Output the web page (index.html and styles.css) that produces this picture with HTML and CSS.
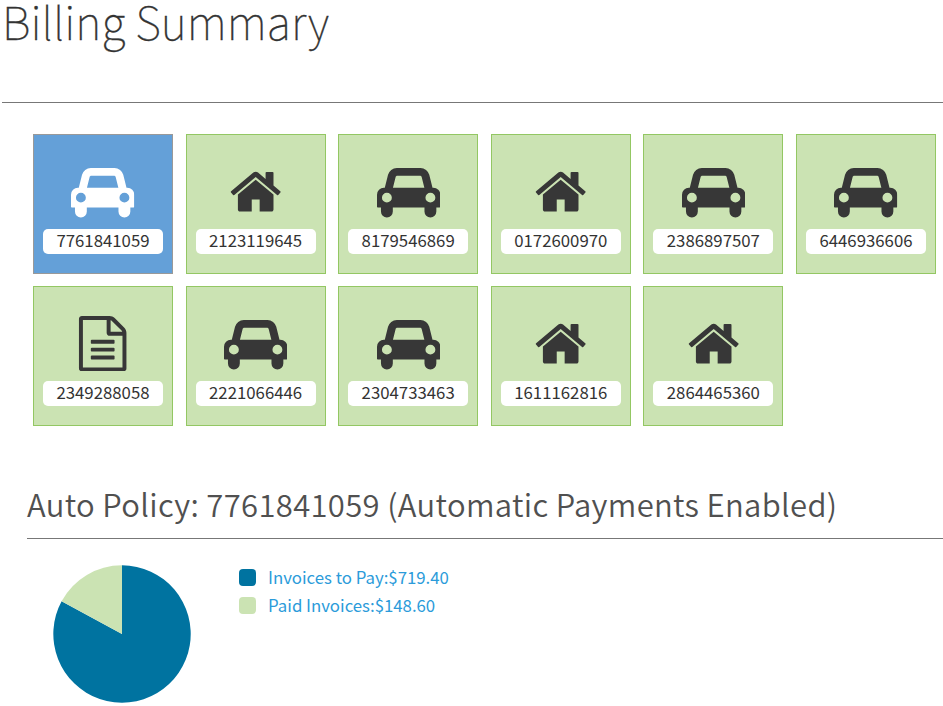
FILE: index.html
```html
<!DOCTYPE html>
<html lang="en">
<head>
<meta charset="utf-8">
<title>Billing Summary</title>
<link rel="stylesheet" href="styles.css">
</head>
<body>
<svg class="defs" width="0" height="0" aria-hidden="true">
  <symbol id="car" viewBox="0 0 2048 1792"><path d="M480 1088q0-66-47-113t-113-47-113 47-47 113 47 113 113 47 113-47 47-113zm36-320h1016l-89-357q-2-8-14-17.500t-21-9.500h-768q-9 0-21 9.500t-14 17.500zm1372 320q0-66-47-113t-113-47-113 47-47 113 47 113 113 47 113-47 47-113zm160-96v384q0 14-9 23t-23 9h-96v128q0 80-56 136t-136 56-136-56-56-136v-128h-1024v128q0 80-56 136t-136 56-136-56-56-136v-128h-96q-14 0-23-9t-9-23v-384q0-93 65.500-158.500t158.500-65.500h28l105-419q23-94 104-157.500t179-63.500h768q98 0 179 63.500t104 157.500l105 419h28q93 0 158.500 65.500t65.500 158.500z"/></symbol>
  <symbol id="home" viewBox="0 0 1792 1792"><path d="M1472 992v480q0 26-19 45t-45 19h-384v-384h-256v384h-384q-26 0-45-19t-19-45v-480q0-1 .5-3t.5-3l575-474 575 474q1 2 1 6zm223-69l-62 74q-8 9-21 11h-3q-13 0-21-7l-692-577-692 577q-12 8-24 7-13-2-21-11l-62-74q-8-10-7-23.500t11-21.500l719-599q32-26 76-26t76 26l244 204v-195q0-14 9-23t23-9h192q14 0 23 9t9 23v408l219 182q10 8 11 21.500t-7 23.500z"/></symbol>
  <symbol id="file" viewBox="0 0 1792 1792"><path d="M1596 380q28 28 48 76t20 88v1152q0 40-28 68t-68 28h-1344q-40 0-68-28t-28-68v-1600q0-40 28-68t68-28h896q40 0 88 20t76 48zm-444-244v376h376q-10-29-22-41l-313-313q-12-12-41-22zm384 1528v-1024h-416q-40 0-68-28t-28-68v-416h-768v1536h1280zM512 800q0-14 9-23t23-9h704q14 0 23 9t9 23v64q0 14-9 23t-23 9h-704q-14 0-23-9t-9-23zM1248 1024q14 0 23 9t9 23v64q0 14-9 23t-23 9h-704q-14 0-23-9t-9-23v-64q0-14 9-23t23-9zM1248 1280q14 0 23 9t9 23v64q0 14-9 23t-23 9h-704q-14 0-23-9t-9-23v-64q0-14 9-23t23-9z"/></symbol>
</svg>
<header class="page-header"><h1>Billing Summary</h1></header>
<main>
  <div class="tiles">
    <div class="tile active"><svg class="icon car"><use href="#car"/></svg><span class="number">7761841059</span></div>
    <div class="tile"><svg class="icon"><use href="#home"/></svg><span class="number">2123119645</span></div>
    <div class="tile"><svg class="icon car"><use href="#car"/></svg><span class="number">8179546869</span></div>
    <div class="tile"><svg class="icon"><use href="#home"/></svg><span class="number">0172600970</span></div>
    <div class="tile"><svg class="icon car"><use href="#car"/></svg><span class="number">2386897507</span></div>
    <div class="tile"><svg class="icon car"><use href="#car"/></svg><span class="number">6446936606</span></div>
    <div class="tile"><svg class="icon"><use href="#file"/></svg><span class="number">2349288058</span></div>
    <div class="tile"><svg class="icon car"><use href="#car"/></svg><span class="number">2221066446</span></div>
    <div class="tile"><svg class="icon car"><use href="#car"/></svg><span class="number">2304733463</span></div>
    <div class="tile"><svg class="icon"><use href="#home"/></svg><span class="number">1611162816</span></div>
    <div class="tile"><svg class="icon"><use href="#home"/></svg><span class="number">2864465360</span></div>
  </div>
  <section class="policy">
    <h2>Auto Policy: 7761841059 (Automatic Payments Enabled)</h2>
    <div class="summary">
      <svg class="pie" viewBox="0 0 138 138"><path d="M69 69V.3A68.700 68.700 0 1 1 8.600 36.300Z" fill="#0073a0"/><path d="M69 69V.3A68.700 68.700 0 0 0 8.600 36.300Z" fill="#cbe3b3"/></svg>
      <ul class="legend">
        <li><span class="swatch due"></span><span class="label">Invoices to Pay:$719.40</span></li>
        <li><span class="swatch paid"></span><span class="label">Paid Invoices:$148.60</span></li>
      </ul>
    </div>
  </section>
</main>
</body>
</html>
```
FILE: styles.css
```css
* { box-sizing: border-box; }
body {
  margin: 0;
  height: 706px;
  overflow: hidden;
  background: #fff;
  color: #333;
  font-family: "Noto Sans CJK SC", "Noto Sans", sans-serif;
}
.defs { display: block; }
h1, h2 { margin: 0; white-space: nowrap; }
.page-header {
  height: 103px;
  margin-left: 2px;
  border-bottom: 1px solid #777;
}
h1 {
  font-size: 45px;
  font-weight: 100;
  line-height: 41px;
  -webkit-text-stroke: .3px #333;
}
.tiles {
  display: grid;
  grid-template-columns: repeat(6, 140px);
  column-gap: 12.600px;
  row-gap: 12px;
  margin: 31px 0 0 33px;
}
.tile {
  height: 140px;
  border: 1px solid #93c763;
  background: #cbe3b3;
  display: flex;
  flex-direction: column;
  align-items: center;
  padding-top: 29px;
}
.tile.active { background: #64a0d8; border-color: #999; }
.icon { width: 55.400px; height: 55.400px; fill: #373737; flex: none; }
.icon.car { width: 63.300px; }
.active .icon { fill: #fff; }
.number {
  width: 120px;
  height: 25px;
  margin-top: 9.600px;
  border-radius: 5px;
  background: #fff;
  text-align: center;
  font-size: 16.800px;
  line-height: 23px;
}
.policy { margin: 54px 0 0 27px; }
h2 {
  height: 59px;
  border-bottom: 1px solid #777;
  color: #505050;
  font-size: 31px;
  font-weight: 350;
  line-height: 48px;
  letter-spacing: .340px;
}
.summary {
  display: flex;
  align-items: flex-start;
  padding: 26px 0 0 26px;
}
.pie { width: 138px; height: 138px; flex: none; }
.legend { list-style: none; margin: -2px 0 0 48px; padding: 0; }
.legend li { display: flex; align-items: center; height: 28px; }
.swatch { width: 17px; height: 17px; border-radius: 4px; margin-right: 12px; }
.due { background: #0073a0; }
.paid { background: #cbe3b3; }
.label { color: #2b9bda; font-size: 16.800px; line-height: 28px; white-space: nowrap; }
```
